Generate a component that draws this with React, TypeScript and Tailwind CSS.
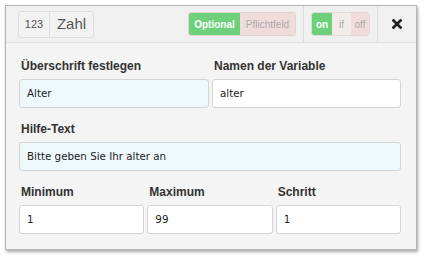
function Field({ label, value, blue, className }: { label: string; value: string; blue?: boolean; className?: string }) {
  return (
    <div className={`flex flex-col ${className ?? ''}`}>
      <label className="h-4 pl-[2px] text-[12px] font-bold leading-4 text-[#333] font-['Liberation_Sans',Arial,sans-serif]">{label}</label>
      <div
        className={`mt-[5px] h-[29px] rounded-[3px] border border-[#d4d4d4] px-[7px] flex items-center text-[10.3px] text-[#222] font-['DejaVu_Sans',Verdana,sans-serif] ${
          blue ? 'bg-[#eef8fd]' : 'bg-white'
        }`}
      >
        {value}
      </div>
    </div>
  );
}

export default function App() {
  return (
    <div className="w-[424px] h-[258px] bg-white pt-[5px] pl-[5px]">
      <div className="w-[412px] h-[245px] border border-[#b5b5b5] bg-[#f4f4f4] shadow-[1px_2px_3px_rgba(0,0,0,0.35)] flex flex-col">
        {/* Header */}
        <div className="h-[37px] bg-[#f0f0f0] border-b border-[#e2e2e2] flex items-center pl-3 font-['Liberation_Sans',Arial,sans-serif]">
          <div className="flex h-[27px] rounded-[3px] border border-[#dedede] bg-[#f2f2f2] text-[#555]">
            <span className="w-[31px] flex items-center justify-center text-[11px] border-r border-[#dedede]">123</span>
            <span className="w-[43px] flex items-center justify-center text-[15px]">Zahl</span>
          </div>

          <div className="ml-auto flex h-[24px] rounded-[3px] border border-[#e2d2d2] overflow-hidden text-[10px]">
            <span className="w-[51px] flex items-center justify-center bg-[#6cd17a] text-white font-bold">Optional</span>
            <span className="w-[55px] flex items-center justify-center bg-[#f1dcdc] text-[#aaa]">Pflichtfeld</span>
          </div>

          <div className="ml-[7px] h-[37px] border-l border-[#dcdcdc]" />

          <div className="ml-[7px] flex h-[24px] rounded-[3px] border border-[#e2d8d8] overflow-hidden text-[10px]">
            <span className="w-[20px] flex items-center justify-center bg-[#6cd17a] text-white font-bold">on</span>
            <span className="w-[19px] flex items-center justify-center bg-[#f2ece8] text-[#aaa]">if</span>
            <span className="w-[18px] flex items-center justify-center bg-[#f1dcdc] text-[#aaa]">off</span>
          </div>

          <div className="ml-[7px] h-[37px] border-l border-[#dcdcdc]" />

          <div className="w-[38px] flex items-center justify-center">
            <svg width="10" height="10" viewBox="0 0 10 10">
              <path d="M1.5 1.5 L8.5 8.5 M8.5 1.5 L1.5 8.5" stroke="#222" strokeWidth="2.7" strokeLinecap="square" />
            </svg>
          </div>
        </div>

        {/* Body */}
        <div className="flex flex-col pt-[15px] pl-[13px] pr-[15px]">
          <div className="grid grid-cols-[190px_1fr] gap-[3px]">
            <Field label="Überschrift festlegen" value="Alter" blue />
            <Field label="Namen der Variable" value="alter" />
          </div>
          <Field className="mt-[13px]" label="Hilfe-Text" value="Bitte geben Sie Ihr alter an" blue />
          <div className="mt-[13px] grid grid-cols-3 gap-[3px]">
            <Field label="Minimum" value="1" />
            <Field label="Maximum" value="99" />
            <Field label="Schritt" value="1" />
          </div>
        </div>
      </div>
    </div>
  );
}
